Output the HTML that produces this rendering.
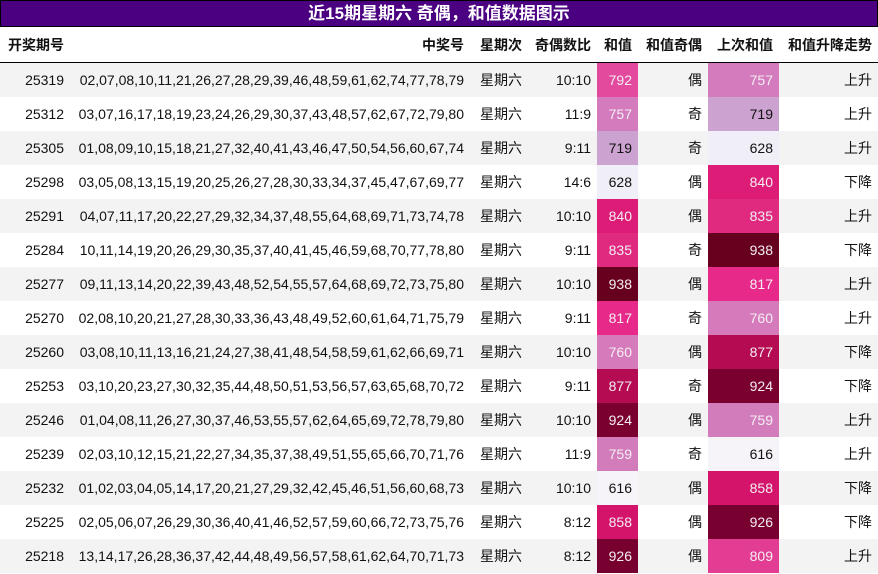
<!DOCTYPE html>
<html><head><meta charset="utf-8"><style>
body{margin:0;width:878px;height:574px;background:#fff;overflow:hidden;font-family:"Liberation Sans","Noto Sans CJK SC",sans-serif;}
.title{position:absolute;left:0;top:0;width:876px;height:25px;background:#4b0082;border:1px solid #000;color:#fff;font-weight:bold;font-size:17px;text-align:center;line-height:26px;}
table{position:absolute;left:0;top:27px;border-collapse:collapse;table-layout:fixed;width:878px;font-size:14px;color:#111;}
td,th{padding:0 6px 0 0;text-align:right;white-space:nowrap;overflow:hidden;}
th{height:35px;font-weight:bold;border-bottom:1px solid #000;}
th:first-child{text-align:left;padding-left:8px;}
td{height:34px;}
tr:nth-child(even) td{background:#f3f3f3;}
td.c{color:#f4eef2;}
td.d{color:#111;}
</style></head><body>
<div class="title">近15期星期六 奇偶，和值数据图示</div>
<table>
<colgroup><col style="width:70px"><col style="width:400px"><col style="width:58px"><col style="width:69px"><col style="width:41px"><col style="width:70px"><col style="width:71px"><col style="width:99px"></colgroup>
<tr><th>开奖期号</th><th>中奖号</th><th>星期次</th><th>奇偶数比</th><th>和值</th><th>和值奇偶</th><th>上次和值</th><th>和值升降走势</th></tr>
<tr><td>25319</td><td>02,07,08,10,11,21,26,27,28,29,39,46,48,59,61,62,74,77,78,79</td><td>星期六</td><td>10:10</td><td class="c" style="background:#e34a9e">792</td><td>偶</td><td class="c" style="background:#d47bbd">757</td><td>上升</td></tr>
<tr><td>25312</td><td>03,07,16,17,18,19,23,24,26,29,30,37,43,48,57,62,67,72,79,80</td><td>星期六</td><td>11:9</td><td class="c" style="background:#d47bbd">757</td><td>奇</td><td class="d" style="background:#cca3d0">719</td><td>上升</td></tr>
<tr><td>25305</td><td>01,08,09,10,15,18,21,27,32,40,41,43,46,47,50,54,56,60,67,74</td><td>星期六</td><td>9:11</td><td class="d" style="background:#cca3d0">719</td><td>奇</td><td class="d" style="background:#f0eef6">628</td><td>上升</td></tr>
<tr><td>25298</td><td>03,05,08,13,15,19,20,25,26,27,28,30,33,34,37,45,47,67,69,77</td><td>星期六</td><td>14:6</td><td class="d" style="background:#f0eef6">628</td><td>偶</td><td class="c" style="background:#dd1c77">840</td><td>下降</td></tr>
<tr><td>25291</td><td>04,07,11,17,20,22,27,29,32,34,37,48,55,64,68,69,71,73,74,78</td><td>星期六</td><td>10:10</td><td class="c" style="background:#dd1c77">840</td><td>偶</td><td class="c" style="background:#df2a80">835</td><td>上升</td></tr>
<tr><td>25284</td><td>10,11,14,19,20,26,29,30,35,37,40,41,45,46,59,68,70,77,78,80</td><td>星期六</td><td>9:11</td><td class="c" style="background:#df2a80">835</td><td>奇</td><td class="c" style="background:#67001f">938</td><td>下降</td></tr>
<tr><td>25277</td><td>09,11,13,14,20,22,39,43,48,52,54,55,57,64,68,69,72,73,75,80</td><td>星期六</td><td>10:10</td><td class="c" style="background:#67001f">938</td><td>偶</td><td class="c" style="background:#e7298a">817</td><td>上升</td></tr>
<tr><td>25270</td><td>02,08,10,20,21,27,28,30,33,36,43,48,49,52,60,61,64,71,75,79</td><td>星期六</td><td>9:11</td><td class="c" style="background:#e7298a">817</td><td>奇</td><td class="c" style="background:#d57aba">760</td><td>上升</td></tr>
<tr><td>25260</td><td>03,08,10,11,13,16,21,24,27,38,41,48,54,58,59,61,62,66,69,71</td><td>星期六</td><td>10:10</td><td class="c" style="background:#d57aba">760</td><td>偶</td><td class="c" style="background:#b50b52">877</td><td>下降</td></tr>
<tr><td>25253</td><td>03,10,20,23,27,30,32,35,44,48,50,51,53,56,57,63,65,68,70,72</td><td>星期六</td><td>9:11</td><td class="c" style="background:#b50b52">877</td><td>奇</td><td class="c" style="background:#7a0030">924</td><td>下降</td></tr>
<tr><td>25246</td><td>01,04,08,11,26,27,30,37,46,53,55,57,62,64,65,69,72,78,79,80</td><td>星期六</td><td>10:10</td><td class="c" style="background:#7a0030">924</td><td>偶</td><td class="c" style="background:#d37cbc">759</td><td>上升</td></tr>
<tr><td>25239</td><td>02,03,10,12,15,21,22,27,34,35,37,38,49,51,55,65,66,70,71,76</td><td>星期六</td><td>11:9</td><td class="c" style="background:#d37cbc">759</td><td>奇</td><td class="d" style="background:#f7f4f9">616</td><td>上升</td></tr>
<tr><td>25232</td><td>01,02,03,04,05,14,17,20,21,27,29,32,42,45,46,51,56,60,68,73</td><td>星期六</td><td>10:10</td><td class="d" style="background:#f7f4f9">616</td><td>偶</td><td class="c" style="background:#d4146a">858</td><td>下降</td></tr>
<tr><td>25225</td><td>02,05,06,07,26,29,30,36,40,41,46,52,57,59,60,66,72,73,75,76</td><td>星期六</td><td>8:12</td><td class="c" style="background:#d4146a">858</td><td>偶</td><td class="c" style="background:#780030">926</td><td>下降</td></tr>
<tr><td>25218</td><td>13,14,17,26,28,36,37,42,44,48,49,56,57,58,61,62,64,70,71,73</td><td>星期六</td><td>8:12</td><td class="c" style="background:#780030">926</td><td>偶</td><td class="c" style="background:#e33d93">809</td><td>上升</td></tr>
</table>
</body></html>
